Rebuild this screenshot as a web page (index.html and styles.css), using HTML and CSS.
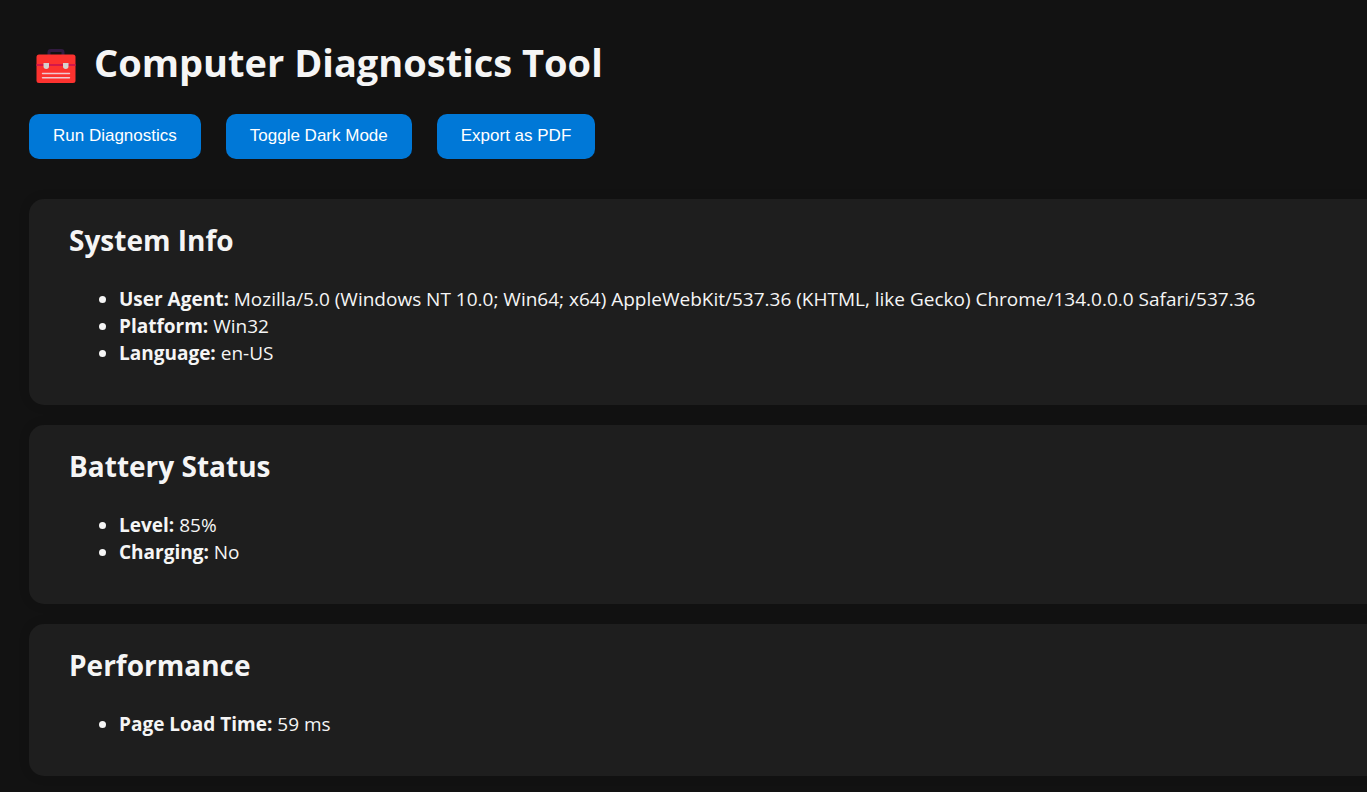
FILE: index.html
```html
<!DOCTYPE html>
<html lang="en">
<head>
  <meta charset="utf-8">
  <title>Computer Diagnostics Tool</title>
  <link rel="stylesheet" href="styles.css">
</head>
<body class="page">
  <header class="header">
    <h1 class="title">
      <svg class="title-icon" viewBox="0 0 40 34" aria-hidden="true">
        <path d="M13 8V3.2Q13 1.5 14.7 1.5H25.3Q27 1.5 27 3.2V8" fill="none" stroke="#321b41" stroke-width="3"/>
        <rect x="0.5" y="5.5" width="39" height="28.5" rx="2.5" fill="#fc322f"/>
        <path d="M0.5 16H39.5" stroke="#d3174a" stroke-width="2"/>
        <path d="M7.5 14H13V17.2A2.75 2.75 0 0 1 7.5 17.2ZM27 14H32.5V17.2A2.75 2.75 0 0 1 27 17.2Z" fill="#d5d2d0"/>
        <path d="M6.500 24.500H33.500M6.500 28.700H33.500" stroke="#efc8d0" stroke-width="1.400" stroke-linecap="round"/>
      </svg>
      <span>Computer Diagnostics Tool</span>
    </h1>
    <div class="actions">
      <button class="button" type="button">Run Diagnostics</button>
      <button class="button" type="button">Toggle Dark Mode</button>
      <button class="button" type="button">Export as PDF</button>
    </div>
  </header>
  <main class="cards">
    <section class="card">
      <h2 class="card-title">System Info</h2>
      <ul class="facts">
        <li><strong>User Agent:</strong> Mozilla/5.0 (Windows NT 10.0; Win64; x64) AppleWebKit/537.36 (KHTML, like Gecko) Chrome/134.0.0.0 Safari/537.36</li>
        <li><strong>Platform:</strong> Win32</li>
        <li><strong>Language:</strong> en-US</li>
      </ul>
    </section>
    <section class="card">
      <h2 class="card-title">Battery Status</h2>
      <ul class="facts">
        <li><strong>Level:</strong> 85%</li>
        <li><strong>Charging:</strong> No</li>
      </ul>
    </section>
    <section class="card">
      <h2 class="card-title">Performance</h2>
      <ul class="facts">
        <li><strong>Page Load Time:</strong> 59 ms</li>
      </ul>
    </section>
  </main>
</body>
</html>
```

FILE: styles.css
```css
* {
  box-sizing: border-box;
}

.page {
  margin: 0;
  padding: 36px 0 16px 29px;
  background: #121212;
  color: #f5f5f5;
  font-family: "Segoe UI", "Open Sans", "Noto Sans", sans-serif;
  font-size: 19px;
  line-height: 27px;
}

.title {
  display: flex;
  align-items: center;
  gap: 18px;
  margin: 0;
  padding-left: 7px;
  font-size: 38px;
  line-height: 52px;
}

.title-icon {
  width: 40px;
  height: 34px;
  margin-top: 8px;
  flex: none;
}

.actions {
  display: flex;
  flex-wrap: wrap;
  gap: 25px;
  margin: 26px 0 40px;
}

.button {
  height: 45px;
  padding: 0 24px 2px;
  border: 0;
  border-radius: 10px;
  background: #0078d7;
  color: #fff;
  font: 17px "Liberation Sans", Arial, sans-serif;
  cursor: pointer;
}

.cards {
  display: grid;
  gap: 20px;
}

.card {
  padding: 21px 40px 38px;
  border-radius: 15px 0 0 15px;
  background: #1e1e1e;
  box-shadow: 0 0 12px rgba(0, 0, 0, 0.1);
}

.card-title {
  margin: 0 0 26px;
  font-size: 28px;
  line-height: 40px;
}

.facts {
  margin: 0;
  padding-left: 50px;
}
```
